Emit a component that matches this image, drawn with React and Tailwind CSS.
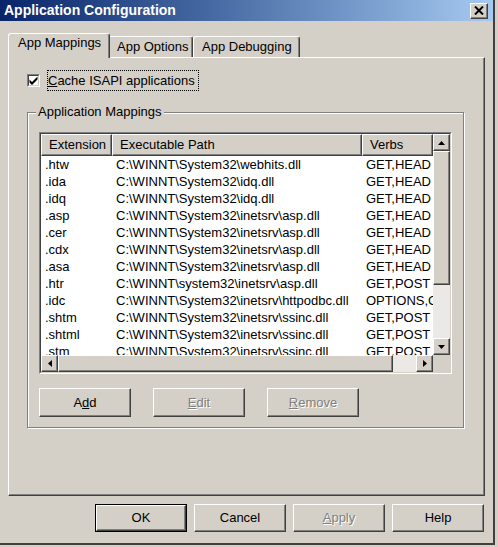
const raised =
  "border border-t-white border-l-white border-r-[#404040] border-b-[#404040] shadow-[inset_-1px_-1px_0_#808080] bg-[#d4d0c8]";

const rows = [
  [".htw", "C:\\WINNT\\System32\\webhits.dll", "GET,HEAD"],
  [".ida", "C:\\WINNT\\System32\\idq.dll", "GET,HEAD"],
  [".idq", "C:\\WINNT\\System32\\idq.dll", "GET,HEAD"],
  [".asp", "C:\\WINNT\\System32\\inetsrv\\asp.dll", "GET,HEAD"],
  [".cer", "C:\\WINNT\\System32\\inetsrv\\asp.dll", "GET,HEAD"],
  [".cdx", "C:\\WINNT\\System32\\inetsrv\\asp.dll", "GET,HEAD"],
  [".asa", "C:\\WINNT\\System32\\inetsrv\\asp.dll", "GET,HEAD"],
  [".htr", "C:\\WINNT\\system32\\inetsrv\\asp.dll", "GET,POST"],
  [".idc", "C:\\WINNT\\System32\\inetsrv\\httpodbc.dll", "OPTIONS,GET,HEAD,POST"],
  [".shtm", "C:\\WINNT\\System32\\inetsrv\\ssinc.dll", "GET,POST"],
  [".shtml", "C:\\WINNT\\System32\\inetsrv\\ssinc.dll", "GET,POST"],
  [".stm", "C:\\WINNT\\System32\\inetsrv\\ssinc.dll", "GET,POST"],
];

function Arrow({ dir }) {
  const pts = {
    up: "0,4 3.5,0 7,4",
    down: "0,0 7,0 3.5,4",
    left: "4,0 4,7 0,3.5",
    right: "0,0 0,7 4,3.5",
  }[dir];
  const vert = dir === "up" || dir === "down";
  return (
    <div className={`w-[17px] h-[17px] flex items-center justify-center ${raised}`}>
      <svg width={vert ? 7 : 4} height={vert ? 4 : 7} viewBox={vert ? "0 0 7 4" : "0 0 4 7"}>
        <polygon points={pts} fill="#000" />
      </svg>
    </div>
  );
}

function Btn({ children, disabled, def }) {
  const inner = (
    <div
      className={`w-full h-full flex items-center justify-center ${raised} ${
        disabled ? "text-[#808080] [text-shadow:1px_1px_0_#fff]" : "text-black"
      }`}
    >
      {children}
    </div>
  );
  if (def) {
    return <div className="w-[92px] h-[28px] border border-black">{inner}</div>;
  }
  return <div className="w-[92px] h-[28px]">{inner}</div>;
}

export default function App() {
  return (
    <div className="w-[498px] h-[547px] bg-[#d4d0c8] overflow-hidden font-['Liberation_Sans',Arial,sans-serif] text-[13px] text-black">
      <div className="w-[495px] h-[545px] flex flex-col border-r-2 border-b-2 border-r-[#404040] border-b-[#404040]">
        {/* Title bar */}
        <div className="h-[21px] shrink-0 flex items-center justify-between pl-[4px] pr-[5px] bg-linear-to-r from-[#0a246a] to-[#a6caf0]">
          <span className="text-white font-bold text-[14px] leading-[21px]">Application Configuration</span>
          <div className={`w-[18px] h-[16px] flex items-center justify-center ${raised}`}>
            <svg width="10" height="9" viewBox="0 0 10 9">
              <path d="M1 0.5 L9 8.5 M9 0.5 L1 8.5" stroke="#000" strokeWidth="2" />
            </svg>
          </div>
        </div>

        {/* Tabs */}
        <div className="mt-[12px] h-[25px] -mb-px flex items-end pl-[8px] relative z-10">
          <div className="w-[102px] h-[25px] bg-[#d4d0c8] border-t border-l border-r border-t-white border-l-white border-r-[#404040] rounded-t-[3px] shadow-[inset_-1px_0_0_#808080] pl-[9px] pt-[1px] leading-[16px]">
            App Mappings
          </div>
          <div className="w-[83px] h-[21px] mb-px bg-[#d4d0c8] border-t border-r border-t-white border-r-[#404040] rounded-tr-[3px] shadow-[inset_-1px_0_0_#808080] pl-[7px] pt-[2px] leading-[16px]">
            App Options
          </div>
          <div className="w-[107px] h-[21px] mb-px bg-[#d4d0c8] border-t border-l border-r border-t-white border-l-white border-r-[#404040] rounded-t-[3px] shadow-[inset_-1px_0_0_#808080] pl-[8px] pt-[2px] leading-[16px]">
            App Debugging
          </div>
        </div>

        {/* Panel */}
        <div className="ml-[8px] w-[477px] h-[439px] shrink-0 border border-t-white border-l-white border-r-[#404040] border-b-[#404040] shadow-[inset_-1px_-1px_0_#808080] pt-[12px] pl-[18px]">
          <div className="flex items-center h-[21px]">
            <div className="w-[13px] h-[13px] border border-t-[#808080] border-l-[#808080] border-r-white border-b-white">
              <div className="w-full h-full bg-white border border-t-[#404040] border-l-[#404040] border-r-[#d4d0c8] border-b-[#d4d0c8] flex items-center justify-center">
                <svg width="9" height="9" viewBox="0 0 9 9">
                  <polygon points="0.5,3.5 3,6 8.5,0.5 8.5,3.5 3,9 0.5,6.5" fill="#000" />
                </svg>
              </div>
            </div>
            <div className="ml-[7px] border border-dotted border-black leading-[19px] pr-[3px]">
              <span className="underline">C</span>ache ISAPI applications
            </div>
          </div>

          <fieldset className="mt-[13px] w-[437px] border border-[#808080] shadow-[inset_1px_1px_0_#fff,1px_1px_0_#fff]">
            <legend className="ml-[8px] px-[2px] bg-[#d4d0c8] leading-[16px]">Application Mappings</legend>
            <div className="pt-[12px] pl-[11px] pb-[10px]">
              {/* List view */}
              <div className="w-[413px] h-[242px] border border-t-[#808080] border-l-[#808080] border-r-white border-b-white">
                <div className="h-full flex bg-white border border-t-[#404040] border-l-[#404040] border-r-[#d4d0c8] border-b-[#d4d0c8]">
                  <div className="w-[392px] flex flex-col">
                    <div className="h-[22px] flex shrink-0">
                      <div className={`w-[71px] pl-[7px] leading-[20px] ${raised}`}>Extension</div>
                      <div className={`w-[250px] pl-[7px] leading-[20px] ${raised}`}>Executable Path</div>
                      <div className={`w-[71px] pl-[7px] leading-[20px] ${raised}`}>Verbs</div>
                    </div>
                    <div className="flex-1 overflow-hidden">
                      {rows.map((r) => (
                        <div key={r[0]} className="flex h-[17px] leading-[17px] whitespace-nowrap">
                          <div className="w-[71px] pl-[4px] overflow-hidden">{r[0]}</div>
                          <div className="w-[250px] pl-[4px] overflow-hidden">{r[1]}</div>
                          <div className="w-[71px] pl-[4px] overflow-hidden">{r[2]}</div>
                        </div>
                      ))}
                    </div>
                    <div className="h-[17px] shrink-0 flex">
                      <Arrow dir="left" />
                      <div className={`w-[335px] h-[17px] ${raised}`} />
                      <div className="flex-1 bg-[#ebe9e5]" />
                      <Arrow dir="right" />
                    </div>
                  </div>
                  <div className="w-[17px] flex flex-col">
                    <Arrow dir="up" />
                    <div className={`h-[134px] w-[17px] shrink-0 ${raised}`} />
                    <div className="flex-1 bg-[#ebe9e5]" />
                    <Arrow dir="down" />
                    <div className="h-[17px] shrink-0 bg-[#d4d0c8]" />
                  </div>
                </div>
              </div>

              <div className="mt-[14px] flex gap-[22px]">
                <div className="w-[92px] h-[29px]">
                  <div className={`w-full h-full flex items-center justify-center ${raised}`}>
                    A<span className="underline">d</span>d
                  </div>
                </div>
                <div className="w-[92px] h-[29px]">
                  <div className={`w-full h-full flex items-center justify-center text-[#808080] [text-shadow:1px_1px_0_#fff] ${raised}`}>
                    <span className="underline">E</span>dit
                  </div>
                </div>
                <div className="w-[92px] h-[29px]">
                  <div className={`w-full h-full flex items-center justify-center text-[#808080] [text-shadow:1px_1px_0_#fff] ${raised}`}>
                    <span className="underline">R</span>emove
                  </div>
                </div>
              </div>
            </div>
          </fieldset>
        </div>

        {/* Bottom buttons */}
        <div className="mt-[8px] w-[485px] pr-px flex justify-end gap-[7px]">
          <Btn def>OK</Btn>
          <Btn>Cancel</Btn>
          <Btn disabled>
            <span className="underline">A</span>pply
          </Btn>
          <Btn>Help</Btn>
        </div>
      </div>
    </div>
  );
}
